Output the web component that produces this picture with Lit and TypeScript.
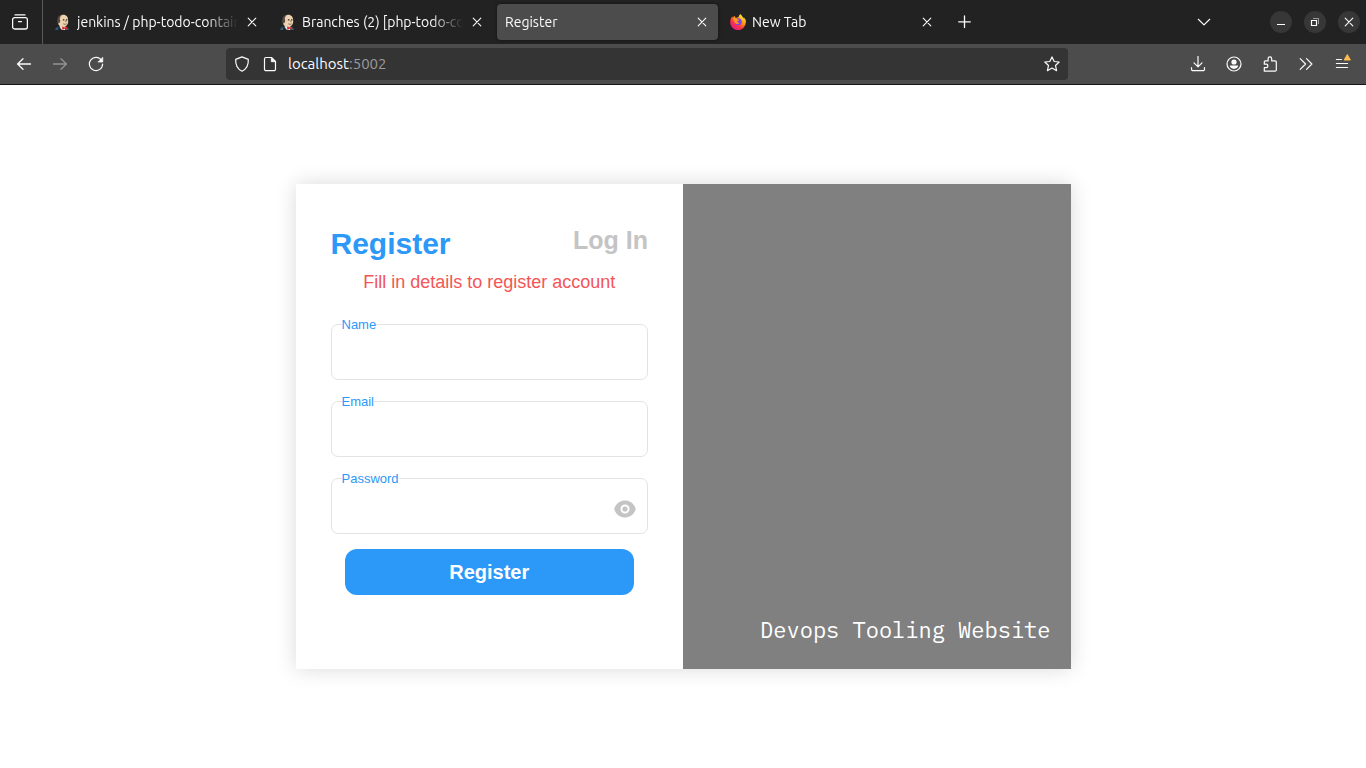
import { LitElement, html, svg, css } from "lit";
import { customElement, property, state } from "lit/decorators.js";

const jenkins = svg`<svg width="16" height="16" viewBox="0 0 16 16">
  <path d="M4.500 12.600 1 13.800 0 16h14l-.6-2-3.400-1.600z" fill="#2f5a78"/>
  <path d="M4.500 11.500 6 16h4l.5-3.600z" fill="#e9e0d6"/>
  <path d="M3.400 12.800 7 16H3.200z" fill="#1b2229"/>
  <path d="M4.200 11.500C2.800 10 2.500 8 3 6 2.800 3 5 .8 8 .7c3.300-.1 5.300 2.300 5.100 5.500.4 2.500-.2 5-2.900 6.200-1.900.7-4.600.3-6-.9z" fill="#ecd2b0"/>
  <path d="M3.700 9.800C1.800 7 1.900 3.300 4.600 1.500 5.500.8 6.400.5 7.400.4 5.500 1.700 4.700 3.300 4.800 5.200c.9 1 .3 3.600-1.100 4.600z" fill="#544a42"/>
  <path d="M7.900 5.900h1.500M11 5.900h1.400" stroke="#33291f" stroke-width="1.100"/>
  <path d="M8.300 9.800c1.200.7 2.300.6 3.300 0M10.500 6.500l.6 1.700" fill="none" stroke="#7a5238" stroke-width=".8"/>
  <path d="M7.200 12.600 9.700 13.500l2.500-.9v3l-2.500-.8-2.500.9z" fill="#d6282c"/>
</svg>`;

const firefox = svg`<svg width="16" height="16" viewBox="0 0 16 16">
  <defs>
    <linearGradient id="flame" x1=".85" y1=".1" x2=".2" y2=".95">
      <stop offset="0" stop-color="#fff44f"/><stop offset=".35" stop-color="#ff980e"/>
      <stop offset=".65" stop-color="#ff3647"/><stop offset="1" stop-color="#e31587"/>
    </linearGradient>
  </defs>
  <path d="M15.400 5.500c-.4-.9-1.100-1.700-1.600-2 .4.8.7 1.600.8 2.200C13.700 3.500 12.200 2.600 11 .700 10.700.300 10.600.1 10.600 0 9.300.9 8.700 2.300 8.500 3.300c-.7 0-1.400.2-2 .5L5.200 3.400 4.600 1.700C3.700 2.300 3.200 3 2.900 3.800 2.500 3.400 2.400 2.700 2.400 2.200 1 3.600.2 5.800.2 8.100a7.800 7.800 0 0 0 15.600.5c.1-1.100 0-2.200-.4-3.100z" fill="url(#flame)"/>
  <circle cx="8.200" cy="7.800" r="3.500" fill="#8040e8"/>
  <path d="M3 4.500c1.500-.8 3-.5 4 .3.700.6 1.500.8 2.500.8-.2 1-1.600 1.200-2.100 1.600-.4 1.200.8 2 2.200 1.500C8.500 10.600 5.900 10.500 4.900 8.700 3.800 7 3.600 5.500 3 4.500z" fill="#ff9a1c"/>
</svg>`;

const stroked = (body: unknown) => svg`<svg width="16" height="16" viewBox="0 0 16 16"
  fill="none" stroke="currentColor" stroke-width="1.200" stroke-linecap="round" stroke-linejoin="round">${body}</svg>`;

const icons = {
  view: stroked(svg`<path d="M3 .900h10" /><path d="M2.600 3.600h10.800a2 2 0 0 1 2 2V13a2 2 0 0 1-2 2H2.600a2 2 0 0 1-2-2V5.600a2 2 0 0 1 2-2zM6.500 7.600h3" stroke-width="1.300"/>`),
  close: stroked(svg`<path d="M4.200 4.200l7.600 7.600M11.800 4.200l-7.600 7.600" stroke-width="1.100"/>`),
  plus: stroked(svg`<path d="M7.500 2v11.600M1.700 7.800h11.600" stroke-width="1.300"/>`),
  chevron: stroked(svg`<path d="M2.300 5.300 8 10.900l5.700-5.600"/>`),
  back: stroked(svg`<path d="M14.500 8H1.500M7 2.700 1.600 8 7 13.300" stroke-width="1.300"/>`),
  forward: stroked(svg`<path d="M1.500 8h13M9 2.700 14.400 8 9 13.300" stroke-width="1.300"/>`),
  reload: stroked(svg`<path d="M13.600 4.500A6.600 6.600 0 1 0 14.600 8"/><path d="M14.800 1.500v4.600h-4.600z" fill="currentColor" stroke-width=".6"/>`),
  shield: stroked(svg`<path d="M8 .900 14.300 3.400c.3 5-1.600 9.700-6.300 11.800C3.300 13.100 1.400 8.400 1.700 3.400z"/>`),
  page: stroked(svg`<path d="M4 1.500h5.500L13.500 5.500v7.700a1.500 1.500 0 0 1-1.500 1.500H4a1.500 1.500 0 0 1-1.500-1.500V3A1.500 1.500 0 0 1 4 1.500z"/><path d="M9.300 1.700v4h4z" fill="currentColor" stroke-width=".8"/>`),
  star: stroked(svg`<path d="M8 .900l2.200 4.600 5 .5-3.700 3.500 1.100 5.200L8 12.100l-4.600 2.600 1.100-5.200L.8 6l5-.5z"/>`),
  download: stroked(svg`<path d="M8 .500v10M4 6.800l4 4 4-4M1.500 11.500v1.700a1.500 1.500 0 0 0 1.500 1.500h10a1.500 1.500 0 0 0 1.500-1.500v-1.700"/>`),
  account: stroked(svg`<circle cx="8" cy="8" r="7"/><circle cx="8" cy="6" r="2.600" fill="currentColor" stroke="none"/><path d="M3.700 9.600h8.600c-.3 2-2.100 3.300-4.300 3.300s-4-1.300-4.300-3.300z" fill="currentColor" stroke="none"/>`),
  puzzle: stroked(svg`<path d="M2.300 15.200h10.900a1.100 1.100 0 0 0 1.100-1.100V6a1.100 1.100 0 0 0-1.100-1.100H9.700V2.700a1.800 1.800 0 0 0-3.600 0v2.200H3.400a1.100 1.100 0 0 0-1.100 1.100v2.200h1.900a1.700 1.700 0 0 1 0 3.400H2.300z"/>`),
  more: stroked(svg`<path d="M2.200 2.600 7.600 8l-5.400 5.400M8.500 2.600 13.900 8l-5.400 5.400"/>`),
  minimize: stroked(svg`<path d="M4 10.500h8" stroke-linecap="butt" stroke-width="1"/>`),
  restore: stroked(svg`<path d="M4.500 6.500h5v5h-5z" stroke-linejoin="miter"/><path d="M6 4.500h5.500V10" stroke-width="1" stroke-linecap="butt" stroke-linejoin="miter" opacity=".5"/>`),
};

const menuIcon = svg`<svg width="20" height="20" viewBox="-2 0 20 20" fill="none">
  <path d="M2.400 8.500h5M2.400 12.500h11.200M2.400 16.500h11.200" stroke="#fbfbfe" stroke-width="1.200" stroke-linecap="round"/>
  <path d="M13.300 3.600 16.400 9h-6.200z" fill="#ffbd4f" stroke="#ffbd4f" stroke-linejoin="round"/>
</svg>`;

const eyeIcon = svg`<svg width="26" height="26" viewBox="0 0 24 24" fill="#c4c4c4">
  <path d="M12 4.200C4.700 4.200 2.200 11 2.200 11.600v.8C2.200 13 4.700 19.800 12 19.800s9.800-6.800 9.800-7.400v-.8C21.800 11 19.300 4.200 12 4.200zm0 12a4.200 4.200 0 1 1 0-8.400 4.200 4.200 0 0 1 0 8.400z"/>
  <circle cx="12" cy="12" r="2.400"/>
</svg>`;

interface Tab { title: string; icon?: unknown; active?: boolean; }

const tabs: Tab[] = [
  { title: "jenkins / php-todo-contain", icon: jenkins },
  { title: "Branches (2) [php-todo-co", icon: jenkins },
  { title: "Register", active: true },
  { title: "New Tab", icon: firefox },
];

@customElement("browser-chrome")
class BrowserChrome extends LitElement {
  static styles = css`
    :host {
      display: block;
      color: #fbfbfe;
      font: 14px/20px Ubuntu, "Noto Sans", sans-serif;
    }
    svg { display: block; flex: none; }
    button {
      display: flex;
      align-items: center;
      justify-content: center;
      flex: none;
      padding: 0;
      border: 0;
      background: none;
      color: inherit;
    }
    .strip { display: flex; align-items: center; height: 44px; background: #222; }
    .view { width: 43px; height: 44px; padding-right: 2px; border-right: 1px solid #5a5a5a; box-sizing: border-box; }
    .tabs { display: flex; gap: 4px; flex: 0 1 896px; min-width: 0; margin-left: 4px; }
    .tab {
      display: flex;
      align-items: center;
      gap: 6px;
      flex: 1 1 0;
      min-width: 0;
      height: 36px;
      padding: 0 8px;
      box-sizing: border-box;
      border-radius: 4px;
    }
    .active { background: #4c4c4c; box-shadow: 0 0 3px #111; }
    .title {
      flex: 1;
      overflow: hidden;
      white-space: nowrap;
      mask-image: linear-gradient(to left, transparent, #000 32px);
    }
    .close { width: 16px; height: 16px; }
    .add { width: 36px; height: 36px; margin-left: 4px; }
    .windows { display: flex; align-items: center; gap: 12px; margin: 0 6px 0 auto; }
    .list { width: 32px; height: 32px; margin-right: 38px; }
    .round { width: 22px; height: 22px; border-radius: 50%; background: #373737; }
    .toolbar {
      display: flex;
      align-items: center;
      height: 40px;
      padding: 0 8px;
      background: #4c4c4c;
      border-bottom: 1px solid #18141a;
    }
    .group { display: flex; gap: 4px; }
    .tool { width: 32px; height: 32px; }
    .tool:disabled { opacity: .4; }
    .menu { align-items: flex-start; padding-top: 3px; box-sizing: border-box; }
    .spacer { flex: 8; }
    .address {
      display: flex;
      align-items: center;
      flex: 58;
      height: 32px;
      padding: 0 8px;
      gap: 12px;
      box-sizing: border-box;
      border-radius: 4px;
      background: #343434;
    }
    .url { flex: 1; font-size: 15px; text-decoration: none; color: #fbfbfe; margin-left: -2px; }
    .port { color: #9b9b9d; }
  `;

  render() {
    return html`
      <div class="strip">
        <button class="view" aria-label="Firefox View">${icons.view}</button>
        <div class="tabs">
          ${tabs.map((tab) => html`
            <div class="tab ${tab.active ? "active" : ""}">
              ${tab.icon ?? ""}
              <span class="title">${tab.title}</span>
              <button class="close" aria-label="Close tab">${icons.close}</button>
            </div>`)}
        </div>
        <button class="add" aria-label="Open a new tab">${icons.plus}</button>
        <div class="windows">
          <button class="list" aria-label="List all tabs">${icons.chevron}</button>
          <button class="round" aria-label="Minimize">${icons.minimize}</button>
          <button class="round" aria-label="Restore">${icons.restore}</button>
          <button class="round" aria-label="Close window">${icons.close}</button>
        </div>
      </div>
      <div class="toolbar">
        <div class="group">
          <button class="tool" aria-label="Back">${icons.back}</button>
          <button class="tool" aria-label="Forward" disabled>${icons.forward}</button>
          <button class="tool" aria-label="Reload">${icons.reload}</button>
        </div>
        <div class="spacer"></div>
        <div class="address">
          ${icons.shield}${icons.page}
          <a class="url" href="#">localhost<span class="port">:5002</span></a>
          <button aria-label="Bookmark">${icons.star}</button>
        </div>
        <div class="spacer"></div>
        <div class="group">
          <button class="tool" aria-label="Downloads">${icons.download}</button>
          <button class="tool" aria-label="Account">${icons.account}</button>
          <button class="tool" aria-label="Extensions">${icons.puzzle}</button>
          <button class="tool" aria-label="More tools">${icons.more}</button>
          <button class="tool menu" aria-label="Menu">${menuIcon}</button>
        </div>
      </div>`;
  }
}

@customElement("form-field")
class FormField extends LitElement {
  @property() label = "";
  @property() type = "text";
  @state() revealed = false;

  static styles = css`
    :host { display: block; position: relative; }
    .label {
      position: absolute;
      top: -7px;
      left: 11px;
      font-size: 13px;
      line-height: 16px;
      color: #2c98f8;
      background: #fff;
    }
    .input {
      display: block;
      width: 100%;
      height: 56px;
      padding: 0 10px;
      box-sizing: border-box;
      border: 1px solid #e3e3e3;
      border-radius: 7px;
      outline: none;
      background: #fff;
      font: 18px "Nimbus Sans", "Liberation Sans", sans-serif;
    }
    .eye {
      position: absolute;
      top: 18px;
      right: 10px;
      padding: 0;
      border: 0;
      background: none;
    }
    svg { display: block; }
  `;

  render() {
    const secret = this.type === "password";
    return html`
      <input class="input" id="field" type=${secret && this.revealed ? "text" : this.type}>
      <label class="label" for="field">${this.label}</label>
      ${secret ? html`<button class="eye" type="button" aria-label="Show password"
        @click=${() => (this.revealed = !this.revealed)}>${eyeIcon}</button>` : ""}`;
  }
}

@customElement("app-root")
class AppRoot extends LitElement {
  static styles = css`
    :host {
      display: flex;
      flex-direction: column;
      min-height: 100vh;
      background: #fff;
      font-family: "Nimbus Sans", "Liberation Sans", Arial, sans-serif;
    }
    .page { flex: 1; display: flex; align-items: center; justify-content: center; }
    .card {
      display: grid;
      grid-template-columns: 1fr 1fr;
      width: 100%;
      max-width: 775px;
      box-shadow: 0 0 20px rgba(0, 0, 0, .15);
    }
    .form { padding: 40px 35px 74px; }
    .head { display: flex; justify-content: space-between; align-items: flex-start; }
    .title { margin: 0; font-size: 30px; line-height: 40px; color: #2c98f8; }
    .login { font-size: 25px; font-weight: bold; line-height: 32px; color: #c4c4c4; text-decoration: none; }
    .message { margin: 8px 0 32px; font-size: 18px; line-height: 20px; color: #f25656; text-align: center; }
    .fields { display: grid; gap: 21px; }
    .submit {
      display: block;
      width: calc(100% - 28px);
      height: 46px;
      margin: 15px auto 0;
      border: 0;
      border-radius: 12px;
      background: #2c98f8;
      color: #fff;
      font: bold 20px "Nimbus Sans", "Liberation Sans", Arial, sans-serif;
    }
    .banner {
      display: flex;
      align-items: flex-end;
      justify-content: flex-end;
      padding: 24px 20px;
      background: #808080;
      color: #fff;
      font: 22px/30px "IBM Plex Mono", "Liberation Mono", monospace;
    }
    .brand { margin: 0; }
  `;

  render() {
    return html`
      <browser-chrome></browser-chrome>
      <main class="page">
        <section class="card">
          <form class="form" @submit=${(e: Event) => e.preventDefault()}>
            <div class="head">
              <h1 class="title">Register</h1>
              <a class="login" href="#">Log In</a>
            </div>
            <p class="message">Fill in details to register account</p>
            <div class="fields">
              <form-field label="Name"></form-field>
              <form-field label="Email" type="email"></form-field>
              <form-field label="Password" type="password"></form-field>
            </div>
            <button class="submit">Register</button>
          </form>
          <div class="banner"><p class="brand">Devops Tooling Website</p></div>
        </section>
      </main>`;
  }
}
